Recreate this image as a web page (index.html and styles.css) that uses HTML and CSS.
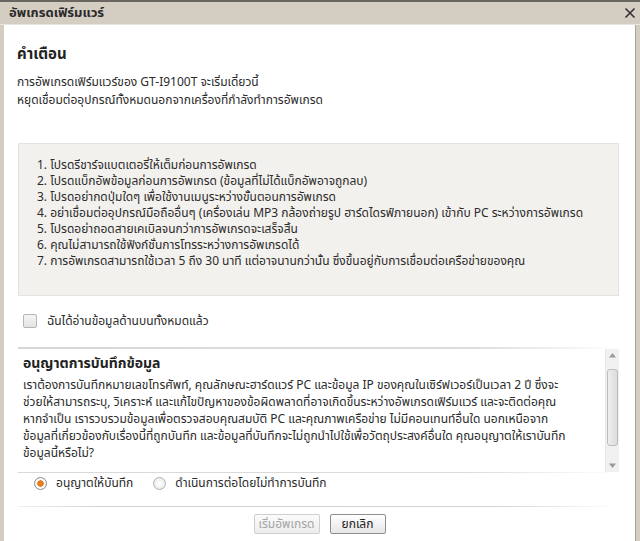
FILE: index.html
```html
<!DOCTYPE html>
<html lang="th">
<head>
<meta charset="utf-8">
<title>อัพเกรดเฟิร์มแวร์</title>
<link rel="stylesheet" href="styles.css">
</head>
<body>
<div class="window">
  <div class="titlebar">
    <span class="title">อัพเกรดเฟิร์มแวร์</span>
    <svg class="close" width="12" height="12" viewBox="0 0 12 12"><path d="M1.5 1.5 L10.5 10.5 M10.5 1.5 L1.5 10.5" stroke="#333" stroke-width="1.6" fill="none"/></svg>
  </div>
  <div class="frame">
    <div class="content">
      <h1 class="heading">คำเตือน</h1>
      <p class="intro">การอัพเกรดเฟิร์มแวร์ของ GT-I9100T จะเริ่มเดี๋ยวนี้<br>หยุดเชื่อมต่ออุปกรณ์ทั้งหมดนอกจากเครื่องที่กำลังทำการอัพเกรด</p>
      <div class="notice">
        <div class="item">1. โปรดรีชาร์จแบตเตอรี่ให้เต็มก่อนการอัพเกรด</div>
        <div class="item">2. โปรดแบ็กอัพข้อมูลก่อนการอัพเกรด (ข้อมูลที่ไม่ได้แบ็กอัพอาจถูกลบ)</div>
        <div class="item">3. โปรดอย่ากดปุ่มใดๆ เพื่อใช้งานเมนูระหว่างขั้นตอนการอัพเกรด</div>
        <div class="item">4. อย่าเชื่อมต่ออุปกรณ์มือถืออื่นๆ (เครื่องเล่น MP3 กล้องถ่ายรูป ฮาร์ดไดรฟ์ภายนอก) เข้ากับ PC ระหว่างการอัพเกรด</div>
        <div class="item">5. โปรดอย่าถอดสายเคเบิลจนกว่าการอัพเกรดจะเสร็จสิ้น</div>
        <div class="item">6. คุณไม่สามารถใช้ฟังก์ชั่นการโทรระหว่างการอัพเกรดได้</div>
        <div class="item">7. การอัพเกรดสามารถใช้เวลา 5 ถึง 30 นาที แต่อาจนานกว่านั้น ซึ่งขึ้นอยู่กับการเชื่อมต่อเครือข่ายของคุณ</div>
      </div>
      <label class="check-row"><span class="checkbox"></span><span>ฉันได้อ่านข้อมูลด้านบนทั้งหมดแล้ว</span></label>
      <div class="consent">
        <div class="consent-body">
          <h2 class="consent-title">อนุญาตการบันทึกข้อมูล</h2>
          <p class="consent-text">เราต้องการบันทึกหมายเลขโทรศัพท์, คุณลักษณะฮาร์ดแวร์ PC และข้อมูล IP ของคุณในเซิร์ฟเวอร์เป็นเวลา 2 ปี ซึ่งจะ<br>ช่วยให้สามารถระบุ, วิเคราะห์ และแก้ไขปัญหาของข้อผิดพลาดที่อาจเกิดขึ้นระหว่างอัพเกรดเฟิร์มแวร์ และจะติดต่อคุณ<br>หากจำเป็น เรารวบรวมข้อมูลเพื่อตรวจสอบคุณสมบัติ PC และคุณภาพเครือข่าย ไม่มีคอนเทนท์อื่นใด นอกเหนือจาก<br>ข้อมูลที่เกี่ยวข้องกับเรื่องนี้ที่ถูกบันทึก และข้อมูลที่บันทึกจะไม่ถูกนำไปใช้เพื่อวัตถุประสงค์อื่นใด คุณอนุญาตให้เราบันทึก<br>ข้อมูลนี้หรือไม่?</p>
        </div>
        <div class="scrollbar">
          <svg class="arrow" width="13" height="12" viewBox="0 0 13 12"><path d="M3 8.5 L6.5 4 L10 8.5 Z" fill="#9a9a9a"/></svg>
          <div class="track"><div class="thumb"></div></div>
          <svg class="arrow" width="13" height="12" viewBox="0 0 13 12"><path d="M3 3.5 L6.5 8 L10 3.5 Z" fill="#9a9a9a"/></svg>
        </div>
      </div>
      <div class="radio-row">
        <label class="radio-opt"><span class="radio on"></span><span>อนุญาตให้บันทึก</span></label>
        <label class="radio-opt"><span class="radio"></span><span>ดำเนินการต่อโดยไม่ทำการบันทึก</span></label>
      </div>
      <div class="separator"></div>
      <div class="buttons">
        <button class="btn btn-start" disabled>เริ่มอัพเกรด</button>
        <button class="btn btn-cancel">ยกเลิก</button>
      </div>
    </div>
  </div>
</div>
</body>
</html>
```
FILE: styles.css
```css
* { box-sizing: border-box; }
html, body { margin: 0; padding: 0; }
body {
  width: 640px;
  height: 541px;
  overflow: hidden;
  font-family: Tahoma, "Noto Sans Thai", "Noto Sans Thai UI", Loma, Garuda, "Noto Sans", "DejaVu Sans", sans-serif;
  font-size: 12px;
  color: #2b2b2b;
  background: #ffffff;
}
.window {
  width: 640px;
  height: 541px;
  display: flex;
  flex-direction: column;
  background: #d4cdc2;
  border-top: 2px solid #6a6660;
}
.titlebar {
  height: 23px;
  flex: 0 0 23px;
  display: flex;
  align-items: center;
  justify-content: space-between;
  padding: 0 4px 0 9px;
  border-bottom: 1px solid #e9e5df;
}
.title {
  font-weight: bold;
  font-size: 13px;
  color: #2a2a2a;
}
.close { margin-right: 0; }
.frame {
  flex: 1;
  display: flex;
  padding-left: 4px;
  background: #d4cdc2;
}
.content {
  flex: 1;
  background: #ffffff;
  border-right: 1px solid #a8a49e;
  margin-right: 4px;
  padding: 20px 16px 0 13px;
  display: flex;
  flex-direction: column;
}
.frame::after { content: ""; }
.heading {
  margin: 0;
  font-size: 15px;
  line-height: 20px;
  font-weight: bold;
  color: #222;
}
.intro {
  margin: 8px 0 0;
  line-height: 18px;
}
.notice {
  margin: 34px 0 0 1px;
  background: #f3f1ee;
  border: 1px solid #e6e3de;
  padding: 13px 18px 26px;
}
.item {
  line-height: 16px;
  white-space: nowrap;
}
.check-row {
  margin: 15px 0 0 6px;
  height: 20px;
  display: flex;
  align-items: center;
  gap: 10px;
}
.checkbox {
  width: 14px;
  height: 14px;
  border: 1px solid #b5b5b5;
  border-radius: 2px;
  background: linear-gradient(#f4f4f4, #e4e4e4);
}
.consent {
  margin: 16px 0 0 1px;
  height: 126px;
  display: flex;
  border-top: 2px solid transparent;
  border-image: linear-gradient(to right, #d8d8d8 0%, #dcdcdc 75%, #ffffff 100%) 1;
  border-bottom: 1px solid #dedede;
  border-image-slice: 1;
}
.consent-body {
  flex: 1;
  padding: 5px 0 0 5px;
  overflow: hidden;
}
.consent-title {
  margin: 0;
  font-size: 14px;
  line-height: 20px;
  font-weight: bold;
  color: #222;
}
.consent-text {
  margin: 3px 0 0;
  line-height: 17px;
  white-space: nowrap;
}
.scrollbar {
  width: 14px;
  display: flex;
  flex-direction: column;
  background: #f1f1f1;
  border-left: 1px solid #e8e8e8;
}
.arrow { display: block; flex: 0 0 12px; }
.track {
  flex: 1;
  padding: 8px 1px 14px;
  display: flex;
}
.thumb {
  flex: 1;
  border: 1px solid #bdbdbd;
  border-radius: 3px;
  background: linear-gradient(to right, #eeeeee, #dcdcdc);
}
.radio-row {
  height: 18px;
  margin-top: 1px;
  display: flex;
  align-items: center;
  padding-left: 17px;
  gap: 20px;
}
.radio-opt {
  display: flex;
  align-items: center;
  gap: 9px;
}
.radio {
  width: 13px;
  height: 13px;
  border-radius: 50%;
  border: 1px solid #b0b0b0;
  background: radial-gradient(circle, #ffffff 0%, #e6e6e6 100%);
}
.radio.on {
  border-color: #8c8c8c;
  background: radial-gradient(circle, #f08a1c 0%, #e07010 38%, #ffffff 44%, #eeeeee 100%);
}
.separator {
  margin: 14px 0 0 1px;
  height: 1px;
  background: linear-gradient(to right, #f0f0f0 0%, #cfcfcf 15%, #d4d4d4 80%, #ffffff 100%);
}
.buttons {
  margin-top: 7px;
  display: flex;
  justify-content: center;
  gap: 10px;
  padding-left: 3px;
}
.btn {
  font-family: inherit;
  font-size: 12px;
  height: 20px;
  padding: 0;
  border-radius: 2px;
  line-height: 18px;
}
.btn-start {
  width: 66px;
  color: #a5a5a5;
  border: 1px solid #cfcfcf;
  background: linear-gradient(#fbfbfb, #ececec);
}
.btn-cancel {
  width: 56px;
  color: #222;
  border: 1px solid #8e8e8e;
  background: linear-gradient(#ffffff, #e6e6e6);
}
```
